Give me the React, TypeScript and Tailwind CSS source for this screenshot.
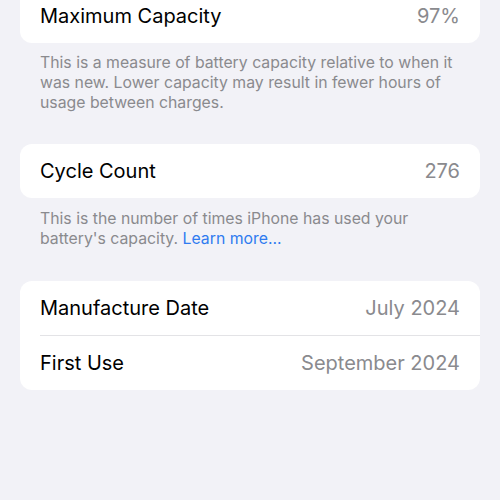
import React from "react";

type Row = { label: string; value: string };

function Card({ rows }: { rows: Row[] }) {
  return (
    <div className="rounded-[12px] bg-white">
      {rows.map((row, i) => (
        <div key={row.label} className="pl-5">
          {i > 0 ? <div className="h-px bg-[#e3e3e6]" /> : null}
          <div className="flex h-[54px] items-center justify-between pr-5">
            <span className="text-[20px] text-black">{row.label}</span>
            <span className="text-[20px] text-[#8a8a8e]">{row.value}</span>
          </div>
        </div>
      ))}
    </div>
  );
}

export default function App() {
  return (
    <div
      className="h-[500px] w-[500px] overflow-hidden bg-[#f2f2f7] px-5"
      style={{ fontFamily: "Inter, 'Noto Sans', sans-serif" }}
    >
      <div className="-mt-[11px]">
        <Card rows={[{ label: "Maximum Capacity", value: "97%" }]} />
      </div>
      <p className="px-5 pt-[10px] text-[15.8px] leading-[20px] text-[#8a8a8e]">
        This is a measure of battery capacity relative to when it was new. Lower capacity may result in fewer hours of
        usage between charges.
      </p>
      <div className="mt-[31px]">
        <Card rows={[{ label: "Cycle Count", value: "276" }]} />
      </div>
      <p className="px-5 pt-[11px] text-[15.8px] leading-[20px] text-[#8a8a8e]">
        This is the number of times iPhone has used your battery's capacity.{" "}
        <span className="text-[#2f7bf0]">Learn more...</span>
      </p>
      <div className="mt-[32px]">
        <Card
          rows={[
            { label: "Manufacture Date", value: "July 2024" },
            { label: "First Use", value: "September 2024" },
          ]}
        />
      </div>
    </div>
  );
}
